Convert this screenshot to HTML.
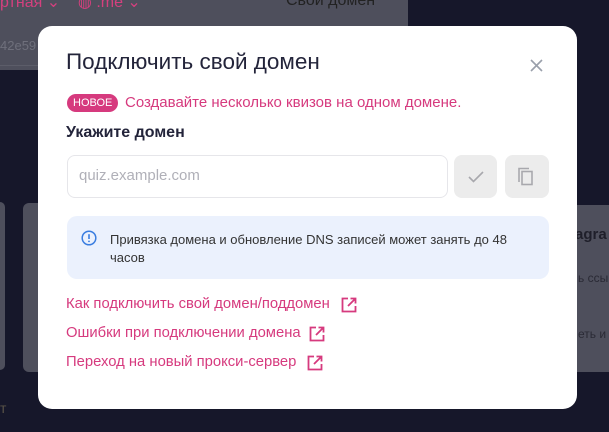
<!DOCTYPE html>
<html><head><meta charset="utf-8"><style>
*{margin:0;padding:0;box-sizing:border-box}
body{width:609px;height:432px;overflow:hidden;background:#16172a;font-family:"Liberation Sans","Noto Sans CJK SC",sans-serif;position:relative}
.bg{position:absolute;background:#4e4f5c}
.modal{position:absolute;left:38px;top:26px;width:539px;height:383px;background:#fff;border-radius:14px}
.t{position:absolute;white-space:nowrap}
a{color:#d63a7e;text-decoration:none}
</style></head><body>
<div class="bg" style="left:0;top:0;width:240px;height:70px;border-radius:0 0 6px 0"></div>
<div style="position:absolute;left:0;top:65px;width:207px;height:1px;background:#5c5d69"></div>
<div class="t" style="left:0;top:-8px;color:#d4407e;font-size:16px">ртная ⌄ &nbsp;&nbsp;&nbsp;◍ .me ⌄</div>
<div class="t" style="left:0;top:38px;color:#6f707c;font-size:13px">42e59</div>
<div class="bg" style="left:226px;top:0;width:182px;height:40px;border-radius:0 0 6px 6px"></div>
<div class="t" style="left:286px;top:-8px;color:#222;font-size:16px">Свой домен</div>
<div class="bg" style="left:0;top:202px;width:5px;height:168px;border-radius:0 6px 6px 0"></div>
<div class="bg" style="left:23px;top:203px;width:30px;height:169px;border-radius:6px"></div>
<div class="bg" style="left:570px;top:205px;width:39px;height:167px"></div>
<div class="t" style="left:575px;top:226px;color:#1f1f2a;font-size:15px;font-weight:bold">agra</div>
<div class="t" style="left:578px;top:271px;color:#2a2a35;font-size:12px">ь ссы</div>
<div class="t" style="left:578px;top:327px;color:#2a2a35;font-size:12px">еть и</div>
<div class="t" style="left:0;top:400px;color:#5a5448;font-size:14px">т</div>
<div class="modal">
 <div class="t" style="left:28px;top:23px;font-size:22.5px;color:#23243a">Подключить свой домен</div>
 <svg style="position:absolute;left:492px;top:33px" width="13" height="13" viewBox="0 0 13 13"><path d="M1 1L12 12M12 1L1 12" stroke="#9aa0ab" stroke-width="1.6"/></svg>
 <div class="t" style="left:29px;top:68px;background:#d63a7e;color:#fff;font-size:11px;border-radius:9px;padding:0 6px;height:18px;line-height:18px">НОВОЕ</div>
 <div class="t" style="left:87px;top:68px;color:#d63a7e;font-size:15px">Создавайте несколько квизов на одном домене.</div>
 <div class="t" style="left:28px;top:98px;color:#23243a;font-size:16px;font-weight:bold">Укажите домен</div>
 <div style="position:absolute;left:29px;top:129px;width:381px;height:43px;border:1px solid #e6e6ea;border-radius:8px"></div>
 <div class="t" style="left:41px;top:141px;color:#b0b0b8;font-size:15px">quiz.example.com</div>
 <div style="position:absolute;left:416px;top:129px;width:43px;height:43px;background:#ececec;border-radius:8px"></div>
 <svg style="position:absolute;left:430px;top:145px" width="16" height="12" viewBox="0 0 16 12"><path d="M1 6L5.5 10.5L15 1" stroke="#a8a8ad" stroke-width="1.6" fill="none"/></svg>
 <div style="position:absolute;left:467px;top:129px;width:44px;height:43px;background:#ececec;border-radius:8px"></div>
 <svg style="position:absolute;left:479px;top:141px" width="20" height="20" viewBox="0 0 20 20"><path d="M2 15V1.5H12" stroke="#a8a8ad" stroke-width="1.6" fill="none"/><rect x="5" y="4.5" width="10" height="13" stroke="#a8a8ad" stroke-width="1.6" fill="none"/></svg>
 <div style="position:absolute;left:29px;top:190px;width:482px;height:63px;background:#ebf1fd;border-radius:10px"></div>
 <svg style="position:absolute;left:43px;top:204px" width="16" height="16" viewBox="0 0 16 16"><circle cx="8" cy="8" r="6.8" stroke="#3a7de0" stroke-width="1.5" fill="none"/><path d="M8 4.2V9" stroke="#3a7de0" stroke-width="1.6"/><circle cx="8" cy="11.4" r="0.9" fill="#3a7de0"/></svg>
 <div class="t" style="left:72px;top:205px;color:#333;font-size:13px;line-height:18px">Привязка домена и обновление DNS записей может занять до 48<br>часов</div>
 <div class="t" style="left:28px;top:270px;font-size:14.8px"><a>Как подключить свой домен/поддомен</a></div>
 <div class="t" style="left:28px;top:299px;font-size:14.8px"><a>Ошибки при подключении домена</a></div>
 <div class="t" style="left:28px;top:328px;font-size:14.8px"><a>Переход на новый прокси-сервер</a></div>
 <svg style="position:absolute;left:303px;top:271px" width="16" height="16" viewBox="0 0 16 16"><path d="M7 1.5H1.5V14.5H14.5V9M9.5 1.5H14.5V6.5M14.5 1.5L7 9" stroke="#d63a7e" stroke-width="1.8" fill="none"/></svg>
 <svg style="position:absolute;left:271px;top:300px" width="16" height="16" viewBox="0 0 16 16"><path d="M7 1.5H1.5V14.5H14.5V9M9.5 1.5H14.5V6.5M14.5 1.5L7 9" stroke="#d63a7e" stroke-width="1.8" fill="none"/></svg>
 <svg style="position:absolute;left:269px;top:329px" width="16" height="16" viewBox="0 0 16 16"><path d="M7 1.5H1.5V14.5H14.5V9M9.5 1.5H14.5V6.5M14.5 1.5L7 9" stroke="#d63a7e" stroke-width="1.8" fill="none"/></svg>
</div>
</body></html>
